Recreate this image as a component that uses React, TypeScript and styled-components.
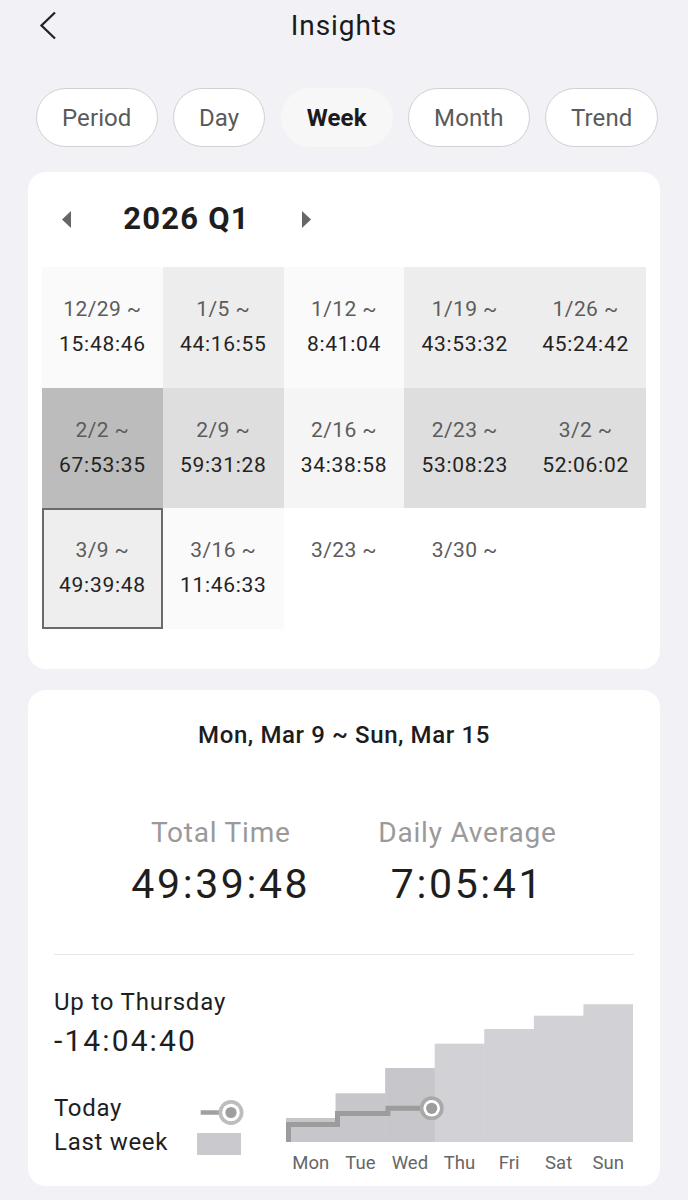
import React from "react";
import styled, { createGlobalStyle } from "styled-components";

const GlobalStyle = createGlobalStyle`
  html, body { margin: 0; padding: 0; background: #f2f2f6; }
  body { font-family: Roboto, "Noto Sans", sans-serif; color: #222; -webkit-font-smoothing: antialiased; }
  * { box-sizing: border-box; }
`;

const Page = styled.div`
  width: 688px;
  min-height: 1200px;
  background: #f2f2f6;
  padding: 0 28px 20px;
`;

const Header = styled.header`
  height: 51px;
  display: grid;
  grid-template-columns: 1fr auto 1fr;
  align-items: center;
`;

const BackButton = styled.button`
  justify-self: start;
  width: 24px;
  height: 30px;
  margin-left: 10.5px;
  padding: 0;
  border: 0;
  background: none;
  display: flex;
`;

const Title = styled.h1`
  margin: 0;
  font: 400 28px/34px Roboto, sans-serif;
  letter-spacing: 0.9px;
  color: #1a1a1a;
`;

const Tabs = styled.nav`
  display: flex;
  gap: 15.5px;
  margin: 37px 0 25px;
  padding-left: 8px;
`;

const Tab = styled.button<{ $active?: boolean }>`
  height: 59px;
  padding: 0 25px;
  border-radius: 30px;
  border: 1.5px solid ${(p) => (p.$active ? "transparent" : "#d0d0d2")};
  background: ${(p) => (p.$active ? "#f7f7f8" : "#ffffff")};
  font: ${(p) => (p.$active ? 700 : 400)} 24px/30px Roboto, sans-serif;
  letter-spacing: 0.1px;
  color: ${(p) => (p.$active ? "#1b1b1b" : "#5a5a5a")};
`;

const QuarterCard = styled.section`
  background: #fff;
  border-radius: 18px;
  padding: 22px 14px 40px;
`;

const QuarterHeader = styled.div`
  display: flex;
  align-items: center;
  height: 50px;
  margin: 0 0 23px 4.5px;
`;

const ArrowButton = styled.button`
  width: 40px;
  height: 50px;
  padding: 0;
  border: 0;
  background: none;
  display: flex;
  align-items: center;
  justify-content: center;
`;

const QuarterTitle = styled.div`
  width: 200px;
  text-align: center;
  font: 700 31px/40px Roboto, sans-serif;
  letter-spacing: 1.2px;
  color: #1e1e1e;
`;

const WeekGrid = styled.div`
  display: grid;
  grid-template-columns: repeat(5, 1fr);
  grid-auto-rows: 120.5px;
`;

const WeekCell = styled.div<{ $bg: string; $selected?: boolean }>`
  background: ${(p) => p.$bg};
  border: ${(p) => (p.$selected ? "2px solid #6a6a6a" : "none")};
  display: flex;
  flex-direction: column;
  align-items: center;
  justify-content: center;
`;

const WeekDate = styled.div`
  height: 35px;
  font: 400 21px/35px Roboto, sans-serif;
  letter-spacing: 0.4px;
  color: #5c5c5c;
`;

const WeekTime = styled.div`
  height: 35px;
  font: 400 21px/35px Roboto, sans-serif;
  letter-spacing: 0.7px;
  color: #232323;
`;

const SummaryCard = styled.section`
  margin-top: 21px;
  background: #fff;
  border-radius: 18px;
  padding: 30px 26px 11px;
`;

const RangeTitle = styled.div`
  text-align: center;
  font: 500 24px/30px Roboto, sans-serif;
  letter-spacing: 0.6px;
  color: #1c1c1c;
`;

const Stats = styled.div`
  display: flex;
  justify-content: center;
  gap: 68px;
  margin-top: 66px;
`;

const Stat = styled.div`
  display: flex;
  flex-direction: column;
  align-items: center;
`;

const StatLabel = styled.div`
  font: 400 28px/34px Roboto, sans-serif;
  letter-spacing: 0.8px;
  color: #9a9a9a;
`;

const StatValue = styled.div`
  margin-top: 9px;
  font: 400 41px/50px Roboto, sans-serif;
  letter-spacing: 2.6px;
  color: #1e1e1e;
`;

const Divider = styled.hr`
  border: 0;
  height: 1px;
  background: #e6e6e8;
  margin: 45px 0 32px;
`;

const Compare = styled.div`
  display: flex;
  align-items: flex-start;
`;

const CompareInfo = styled.div`
  width: 232px;
  display: flex;
  flex-direction: column;
`;

const CompareLabel = styled.div`
  font: 400 24px/30px Roboto, sans-serif;
  letter-spacing: 0.8px;
  color: #1e1e1e;
`;

const CompareValue = styled.div`
  margin-top: 4px;
  font: 400 30px/40px Roboto, sans-serif;
  letter-spacing: 2.1px;
  color: #1e1e1e;
`;

const Legend = styled.div`
  margin-top: 30px;
  display: grid;
  grid-template-columns: 142px 46px;
  grid-auto-rows: 34.5px;
  align-items: center;
`;

const LegendLabel = styled.div`
  font: 400 24px/30px Roboto, sans-serif;
  letter-spacing: 0.7px;
  color: #1e1e1e;
`;

const Swatch = styled.div`
  width: 44px;
  height: 22px;
  margin: 3px 0 0 1px;
  background: #cacace;
`;

const ChartArea = styled.div`
  width: 347px;
  margin-top: 17.5px;
  svg { display: block; }
`;

const DayLabels = styled.div`
  display: grid;
  grid-template-columns: repeat(7, 1fr);
  margin-top: 9.3px;
`;

const DayLabel = styled.div`
  text-align: center;
  font: 400 18.5px/24px Roboto, sans-serif;
  color: #666;
`;

const tabs = ["Period", "Day", "Week", "Month", "Trend"];

const weeks = [
  { d: "12/29 ~", t: "15:48:46", bg: "#fafafa" },
  { d: "1/5 ~", t: "44:16:55", bg: "#ededed" },
  { d: "1/12 ~", t: "8:41:04", bg: "#fafafa" },
  { d: "1/19 ~", t: "43:53:32", bg: "#ededed" },
  { d: "1/26 ~", t: "45:24:42", bg: "#ededed" },
  { d: "2/2 ~", t: "67:53:35", bg: "#bcbcbc" },
  { d: "2/9 ~", t: "59:31:28", bg: "#dedede" },
  { d: "2/16 ~", t: "34:38:58", bg: "#f5f5f5" },
  { d: "2/23 ~", t: "53:08:23", bg: "#dedede" },
  { d: "3/2 ~", t: "52:06:02", bg: "#dedede" },
  { d: "3/9 ~", t: "49:39:48", bg: "#eeeeee", selected: true },
  { d: "3/16 ~", t: "11:46:33", bg: "#fafafa" },
  { d: "3/23 ~", t: "", bg: "#ffffff" },
  { d: "3/30 ~", t: "", bg: "#ffffff" },
  { d: "", t: "", bg: "#ffffff" },
];

const days = ["Mon", "Tue", "Wed", "Thu", "Fri", "Sat", "Sun"];
const barTops = [114, 89.3, 64, 39.7, 25, 11.7, 0.3];
const CHART_W = 347;
const CHART_H = 138;
const COL = CHART_W / 7;

const Triangle = ({ dir }: { dir: "left" | "right" }) => (
  <svg width="9" height="17" viewBox="0 0 9 17">
    <polygon points={dir === "left" ? "9,0 0,8.5 9,17" : "0,0 9,8.5 0,17"} fill="#666" />
  </svg>
);

const TodayMarker = ({ cx, cy, outer = "#a9a9a9" }: { cx: number; cy: number; outer?: string }) => (
  <g>
    <circle cx={cx} cy={cy} r={12} fill={outer} />
    <circle cx={cx} cy={cy} r={8.3} fill="#fff" />
    <circle cx={cx} cy={cy} r={5.6} fill="#9c9c9c" />
  </g>
);

export default function App() {
  return (
    <>
      <GlobalStyle />
      <Page>
        <Header>
          <BackButton aria-label="Back">
            <svg width="24" height="30" viewBox="0 0 24 30">
              <path d="M16 1.5 L2.5 14.5 L16 27.5" fill="none" stroke="#222" strokeWidth="2.3" />
            </svg>
          </BackButton>
          <Title>Insights</Title>
          <div />
        </Header>

        <Tabs>
          {tabs.map((t) => (
            <Tab key={t} $active={t === "Week"}>
              {t}
            </Tab>
          ))}
        </Tabs>

        <QuarterCard>
          <QuarterHeader>
            <ArrowButton aria-label="Previous">
              <Triangle dir="left" />
            </ArrowButton>
            <QuarterTitle>2026 Q1</QuarterTitle>
            <ArrowButton aria-label="Next">
              <Triangle dir="right" />
            </ArrowButton>
          </QuarterHeader>
          <WeekGrid>
            {weeks.map((w, i) => (
              <WeekCell key={i} $bg={w.bg} $selected={w.selected}>
                <WeekDate>{w.d}</WeekDate>
                <WeekTime>{w.t}</WeekTime>
              </WeekCell>
            ))}
          </WeekGrid>
        </QuarterCard>

        <SummaryCard>
          <RangeTitle>Mon, Mar 9 ~ Sun, Mar 15</RangeTitle>
          <Stats>
            <Stat>
              <StatLabel>Total Time</StatLabel>
              <StatValue>49:39:48</StatValue>
            </Stat>
            <Stat>
              <StatLabel>Daily Average</StatLabel>
              <StatValue>7:05:41</StatValue>
            </Stat>
          </Stats>
          <Divider />
          <Compare>
            <CompareInfo>
              <CompareLabel>Up to Thursday</CompareLabel>
              <CompareValue>-14:04:40</CompareValue>
              <Legend>
                <LegendLabel>Today</LegendLabel>
                <svg width="46" height="34" viewBox="0 0 46 34" style={{ overflow: "visible" }}>
                  <line x1="4.7" y1="21.5" x2="26" y2="21.5" stroke="#a0a0a0" strokeWidth="4.5" />
                  <circle cx="35" cy="21.5" r="12.5" fill="#bdbdbd" />
                  <circle cx="35" cy="21.5" r="8.8" fill="#fff" />
                  <circle cx="35" cy="21.5" r="5.6" fill="#9e9e9e" />
                </svg>
                <LegendLabel>Last week</LegendLabel>
                <Swatch />
              </Legend>
            </CompareInfo>
            <ChartArea>
              <svg width={CHART_W} height={CHART_H} viewBox={`0 0 ${CHART_W} ${CHART_H}`}>
                {barTops.map((top, i) => (
                  <rect
                    key={i}
                    x={i * COL}
                    y={top}
                    width={COL + 0.5}
                    height={CHART_H - top}
                    fill={i < 3 ? "#c7c7cb" : "#d2d2d6"}
                  />
                ))}
                <path
                  d="M2.5 138 V120.5 H51.5 V109.5 H102 V104.2 H145.7"
                  fill="none"
                  stroke="#9c9c9c"
                  strokeWidth="5"
                />
                <TodayMarker cx={145.7} cy={104.3} />
              </svg>
              <DayLabels>
                {days.map((d) => (
                  <DayLabel key={d}>{d}</DayLabel>
                ))}
              </DayLabels>
            </ChartArea>
          </Compare>
        </SummaryCard>
      </Page>
    </>
  );
}
